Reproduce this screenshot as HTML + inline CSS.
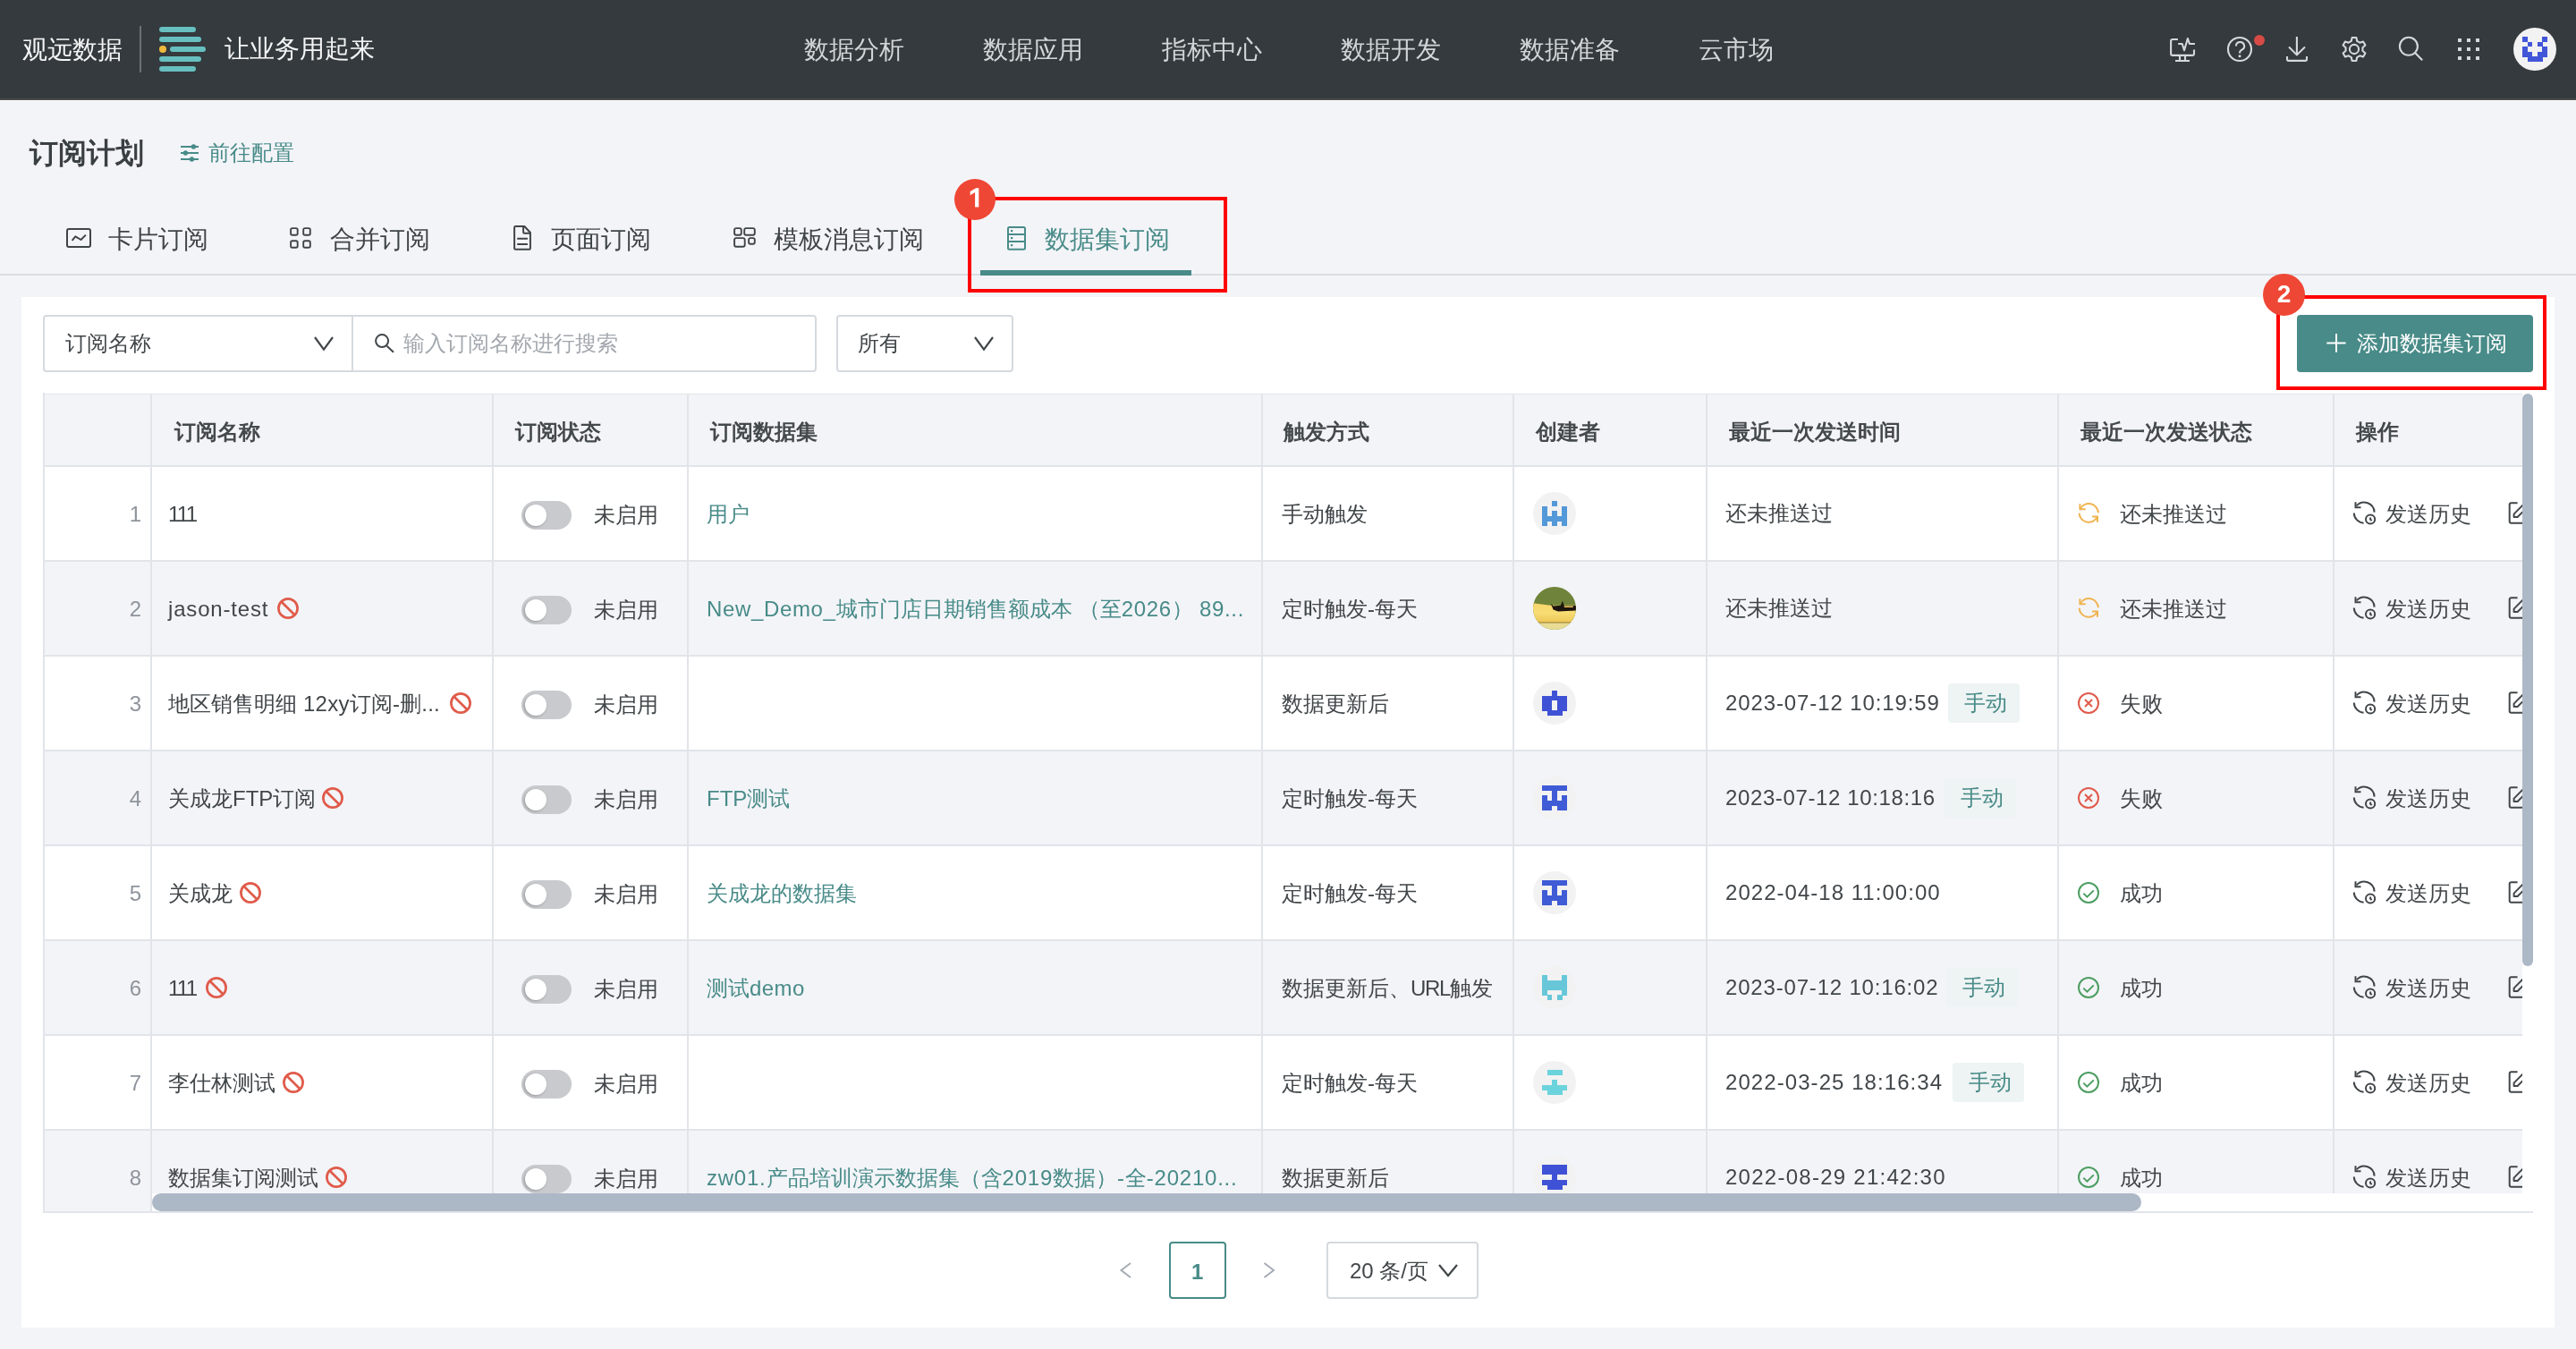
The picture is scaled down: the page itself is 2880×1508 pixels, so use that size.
<!DOCTYPE html><html><head><meta charset="utf-8"><style>
html,body{margin:0;padding:0}
body{width:2880px;height:1508px;overflow:hidden;position:relative;background:#f3f4f8;font-family:"Liberation Sans",sans-serif}
.a{position:absolute}
.t{white-space:nowrap}
#root{position:absolute;left:0;top:0;width:2880px;height:1508px;will-change:transform}
</style></head><body><div id="root">
<div class="a" style="left:0px;top:0px;width:2880px;height:110px;background:#343a3d"></div>
<div class="a" style="left:0px;top:110px;width:2880px;height:2px;background:#4a4b4c"></div>
<div class="a" style="left:0px;top:112px;width:2880px;height:1px;background:#ffffff"></div>
<div class="a t " style="left:25px;top:42px;font-size:28px;line-height:28px;color:#f4f5f6;font-weight:400;">观远数据</div>
<div class="a" style="left:156px;top:29px;width:2px;height:52px;background:#6c7174"></div>
<div class="a" style="left:178px;top:29.5px;width:41px;height:6.5px;background:#67bfc0;border-radius:4px"></div>
<div class="a" style="left:178px;top:40.5px;width:47px;height:6.5px;background:#67bfc0;border-radius:4px"></div>
<div class="a" style="left:190px;top:51.5px;width:40px;height:6.5px;background:#67bfc0;border-radius:4px"></div>
<div class="a" style="left:178px;top:62.5px;width:47px;height:6.5px;background:#67bfc0;border-radius:4px"></div>
<div class="a" style="left:178px;top:73.5px;width:41px;height:6.5px;background:#67bfc0;border-radius:4px"></div>
<div class="a" style="left:178px;top:51px;width:8px;height:8px;background:#f0b93e;border-radius:50%"></div>
<div class="a t " style="left:251px;top:41px;font-size:28px;line-height:28px;color:#f4f5f6;font-weight:400;">让业务用起来</div>
<div class="a t " style="left:899px;top:42px;font-size:28px;line-height:28px;color:#d3d6d9;font-weight:400;">数据分析</div>
<div class="a t " style="left:1099px;top:42px;font-size:28px;line-height:28px;color:#d3d6d9;font-weight:400;">数据应用</div>
<div class="a t " style="left:1299px;top:42px;font-size:28px;line-height:28px;color:#d3d6d9;font-weight:400;">指标中心</div>
<div class="a t " style="left:1499px;top:42px;font-size:28px;line-height:28px;color:#d3d6d9;font-weight:400;">数据开发</div>
<div class="a t " style="left:1699px;top:42px;font-size:28px;line-height:28px;color:#d3d6d9;font-weight:400;">数据准备</div>
<div class="a t " style="left:1899px;top:42px;font-size:28px;line-height:28px;color:#d3d6d9;font-weight:400;">云市场</div>
<svg class="a" style="left:2420px;top:36px;" width="40" height="38" viewBox="0 0 40 38" fill="none"><g stroke="#d5d8dc" stroke-width="2.1" fill="none"><path d="M14.9 8 H9.1 Q7.1 8 7.1 10 V23.9 Q7.1 25.9 9.1 25.9 H31 Q33 25.9 33 23.9 V19.4"/><path d="M15.2 13 H19.7 L22 20.3 L25.9 7 L27.9 13 H33.9" stroke-linejoin="round"/><path d="M17 25.9 V32 M23 25.9 V32 M12 32 H28"/></g></svg>
<svg class="a" style="left:2484px;top:34px;" width="52" height="40" viewBox="0 0 52 40" fill="none"><g stroke="#d5d8dc" stroke-width="2.1" fill="none"><circle cx="20" cy="21" r="13"/><path d="M15.9 17.6 A4.6 4.6 0 1 1 22.3 21.8 Q20.1 22.9 20.1 24.6 V25.6"/></g><circle cx="20" cy="28.8" r="1.5" fill="#d5d8dc"/><circle cx="42" cy="11" r="6" fill="#d84a45"/></svg>
<svg class="a" style="left:2550px;top:36px;" width="40" height="38" viewBox="0 0 40 38" fill="none"><g stroke="#d5d8dc" stroke-width="2.1" fill="none"><path d="M17.9 5 V25.5 M9 16.6 L17.9 25.4 L27 16.6"/><path d="M7 27 V30.2 Q7 31.9 8.7 31.9 H27.3 Q29 31.9 29 30.2 V27"/></g></svg>
<svg class="a" style="left:2612px;top:36px;" width="40" height="38" viewBox="0 0 40 38" fill="none"><g stroke="#d5d8dc" stroke-width="2.1" fill="none" stroke-linejoin="round"><path d="M17.64 6.01 L22.36 6.01 L23.22 9.96 L26.22 11.69 L30.07 10.46 L32.43 14.55 L29.44 17.27 L29.44 20.73 L32.43 23.45 L30.07 27.54 L26.22 26.31 L23.22 28.04 L22.36 31.99 L17.64 31.99 L16.78 28.04 L13.78 26.31 L9.93 27.54 L7.57 23.45 L10.56 20.73 L10.56 17.27 L7.57 14.55 L9.93 10.46 L13.78 11.69 L16.78 9.96 Z"/><circle cx="20" cy="19" r="5.1"/></g></svg>
<svg class="a" style="left:2676px;top:36px;" width="40" height="38" viewBox="0 0 40 38" fill="none"><g stroke="#d5d8dc" stroke-width="2.1" fill="none"><circle cx="16.9" cy="15.8" r="10"/><path d="M24 23 L32.2 31.3"/></g></svg>
<div class="a" style="left:2747.5px;top:42.7px;width:4.8px;height:4.8px;background:#d5d8dc"></div>
<div class="a" style="left:2757.5px;top:42.7px;width:4.8px;height:4.8px;background:#d5d8dc"></div>
<div class="a" style="left:2767.5px;top:42.7px;width:4.8px;height:4.8px;background:#d5d8dc"></div>
<div class="a" style="left:2747.5px;top:52.7px;width:4.8px;height:4.8px;background:#d5d8dc"></div>
<div class="a" style="left:2757.5px;top:52.7px;width:4.8px;height:4.8px;background:#d5d8dc"></div>
<div class="a" style="left:2767.5px;top:52.7px;width:4.8px;height:4.8px;background:#d5d8dc"></div>
<div class="a" style="left:2747.5px;top:62.7px;width:4.8px;height:4.8px;background:#d5d8dc"></div>
<div class="a" style="left:2757.5px;top:62.7px;width:4.8px;height:4.8px;background:#d5d8dc"></div>
<div class="a" style="left:2767.5px;top:62.7px;width:4.8px;height:4.8px;background:#d5d8dc"></div>
<div class="a" style="left:2810px;top:31px;width:48px;height:48px;border-radius:50%;background:#f2f2f2;overflow:hidden">
<div class="a" style="left:10.00px;top:10.00px;width:5.80px;height:5.80px;background:#4256d8"></div>
<div class="a" style="left:32.40px;top:10.00px;width:5.80px;height:5.80px;background:#4256d8"></div>
<div class="a" style="left:15.60px;top:15.60px;width:5.80px;height:5.80px;background:#4256d8"></div>
<div class="a" style="left:26.80px;top:15.60px;width:5.80px;height:5.80px;background:#4256d8"></div>
<div class="a" style="left:10.00px;top:21.20px;width:5.80px;height:5.80px;background:#4256d8"></div>
<div class="a" style="left:32.40px;top:21.20px;width:5.80px;height:5.80px;background:#4256d8"></div>
<div class="a" style="left:10.00px;top:26.80px;width:5.80px;height:5.80px;background:#4256d8"></div>
<div class="a" style="left:15.60px;top:26.80px;width:5.80px;height:5.80px;background:#4256d8"></div>
<div class="a" style="left:26.80px;top:26.80px;width:5.80px;height:5.80px;background:#4256d8"></div>
<div class="a" style="left:32.40px;top:26.80px;width:5.80px;height:5.80px;background:#4256d8"></div>
<div class="a" style="left:15.60px;top:32.40px;width:5.80px;height:5.80px;background:#4256d8"></div>
<div class="a" style="left:21.20px;top:32.40px;width:5.80px;height:5.80px;background:#4256d8"></div>
<div class="a" style="left:26.80px;top:32.40px;width:5.80px;height:5.80px;background:#4256d8"></div>
</div>
<div class="a t " style="left:33px;top:155px;font-size:32px;line-height:32px;color:#3a3f43;font-weight:700;">订阅计划</div>
<svg class="a" style="left:198px;top:156px;" width="28" height="28" viewBox="0 0 28 28" fill="none"><g stroke="#488b88" stroke-width="2" fill="none"><path d="M4 8 H24 M4 15 H24 M4 22 H24"/></g><circle cx="18.4" cy="8" r="2.7" fill="#488b88"/><circle cx="9.4" cy="15" r="2.7" fill="#488b88"/><circle cx="16.5" cy="22" r="2.7" fill="#488b88"/></svg>
<div class="a t " style="left:233px;top:159px;font-size:24px;line-height:24px;color:#488b88;font-weight:400;">前往配置</div>
<div class="a" style="left:0px;top:306px;width:2880px;height:2px;background:#d9dde3"></div>
<svg class="a" style="left:66px;top:246px;" width="44" height="38" viewBox="0 0 44 38" fill="none"><g stroke="#3f4447" stroke-width="2" fill="none" stroke-linejoin="round"><rect x="9" y="10" width="26" height="20" rx="2"/><path d="M14.6 22.8 L18.3 18.3 L24.5 22 L29.9 16.6"/></g></svg>
<div class="a t " style="left:121px;top:254px;font-size:28px;line-height:28px;color:#3f4447;font-weight:400;">卡片订阅</div>
<svg class="a" style="left:316px;top:246px;" width="40" height="38" viewBox="0 0 40 38" fill="none"><g stroke="#3f4447" stroke-width="1.9" fill="none"><rect x="9.1" y="9.1" width="7.6" height="7.6" rx="1.8"/><rect x="23.2" y="9.1" width="7.6" height="7.6" rx="1.8"/><rect x="9.1" y="23.2" width="7.6" height="7.6" rx="1.8"/><rect x="23.2" y="23.2" width="7.6" height="7.6" rx="1.8"/></g></svg>
<div class="a t " style="left:369px;top:254px;font-size:28px;line-height:28px;color:#3f4447;font-weight:400;">合并订阅</div>
<svg class="a" style="left:564px;top:246px;" width="40" height="38" viewBox="0 0 40 38" fill="none"><g stroke="#3f4447" stroke-width="2" fill="none" stroke-linejoin="round"><path d="M22.3 7 H12 Q11.1 7 11.1 8.5 V31.7 Q11.1 32.7 12.5 32.7 H27.9 Q28.9 32.7 28.9 31.5 V14 Z"/><path d="M21.1 7 V13.6 Q21.1 14.8 22.3 14.8 H28.9"/><path d="M14.2 20.8 H25.9 M14.2 26.9 H25.9"/></g></svg>
<div class="a t " style="left:616px;top:254px;font-size:28px;line-height:28px;color:#3f4447;font-weight:400;">页面订阅</div>
<svg class="a" style="left:812px;top:246px;" width="40" height="38" viewBox="0 0 40 38" fill="none"><g stroke="#3f4447" stroke-width="1.9" fill="none"><rect x="9.1" y="9.1" width="7.7" height="7.7" rx="2"/><rect x="20.2" y="9.1" width="11.6" height="7.7" rx="2"/><rect x="9.1" y="20.1" width="11.6" height="9.6" rx="2"/><rect x="25.1" y="20.1" width="6.7" height="6.6" rx="2"/></g></svg>
<div class="a t " style="left:865px;top:254px;font-size:28px;line-height:28px;color:#3f4447;font-weight:400;">模板消息订阅</div>
<svg class="a" style="left:1116px;top:246px;" width="40" height="38" viewBox="0 0 40 38" fill="none"><g stroke="#488b88" stroke-width="2" fill="none"><rect x="11" y="7.9" width="19" height="24.9" rx="1.5"/><path d="M11 15.9 H30 M11 23.9 H30"/></g><rect x="14" y="11" width="2.2" height="2.2" fill="#488b88"/><rect x="14" y="19" width="2.2" height="2.2" fill="#488b88"/><rect x="14" y="27" width="2.2" height="2.2" fill="#488b88"/></svg>
<div class="a t " style="left:1168px;top:254px;font-size:28px;line-height:28px;color:#488b88;font-weight:400;">数据集订阅</div>
<div class="a" style="left:1096px;top:302px;width:236px;height:6px;background:#488b88"></div>
<div class="a" style="left:24px;top:332px;width:2832px;height:1152px;background:#ffffff"></div>
<div class="a" style="left:48px;top:352px;width:865px;height:64px;border:2px solid #d5d9df;border-radius:4px;box-sizing:border-box"></div>
<div class="a" style="left:393px;top:352px;width:2px;height:64px;background:#d5d9df"></div>
<div class="a t " style="left:73px;top:372px;font-size:24px;line-height:24px;color:#414649;font-weight:400;">订阅名称</div>
<svg class="a" style="left:346px;top:370px;" width="32" height="28" viewBox="0 0 32 28" fill="none"><path d="M6 7 L16 20.6 L26 7" stroke="#414649" stroke-width="2.2" fill="none"/></svg>
<svg class="a" style="left:410px;top:366px;" width="40" height="36" viewBox="0 0 40 36" fill="none"><g stroke="#414649" stroke-width="2" fill="none"><circle cx="17.1" cy="15.1" r="7"/><path d="M22.5 20.8 L30 27.8"/></g></svg>
<div class="a t " style="left:451px;top:372px;font-size:24px;line-height:24px;color:#a3a8ae;font-weight:400;">输入订阅名称进行搜索</div>
<div class="a" style="left:935px;top:352px;width:198px;height:64px;border:2px solid #d5d9df;border-radius:4px;box-sizing:border-box"></div>
<div class="a t " style="left:959px;top:372px;font-size:24px;line-height:24px;color:#414649;font-weight:400;">所有</div>
<svg class="a" style="left:1084px;top:370px;" width="32" height="28" viewBox="0 0 32 28" fill="none"><path d="M6 7 L16 20.6 L26 7" stroke="#414649" stroke-width="2.2" fill="none"/></svg>
<div class="a" style="left:2568px;top:352px;width:264px;height:64px;background:#488b88;border-radius:4px"></div>
<svg class="a" style="left:2590px;top:362px;" width="40" height="44" viewBox="0 0 40 44" fill="none"><path d="M22 11 V31.8 M11.3 21.5 H32.6" stroke="#fff" stroke-width="2" fill="none"/></svg>
<div class="a t " style="left:2635px;top:372px;font-size:24px;line-height:24px;color:#ffffff;font-weight:400;">添加数据集订阅</div>
<div class="a" style="left:48px;top:440px;width:2772px;height:914px;overflow:hidden">
<div class="a" style="left:0px;top:0px;width:2772px;height:81px;background:#f3f4f8"></div>
<div class="a" style="left:0px;top:80px;width:2772px;height:108px;background:#ffffff"></div>
<div class="a" style="left:0px;top:186px;width:2772px;height:108px;background:#f3f4f8"></div>
<div class="a" style="left:0px;top:292px;width:2772px;height:108px;background:#ffffff"></div>
<div class="a" style="left:0px;top:398px;width:2772px;height:108px;background:#f3f4f8"></div>
<div class="a" style="left:0px;top:504px;width:2772px;height:108px;background:#ffffff"></div>
<div class="a" style="left:0px;top:610px;width:2772px;height:108px;background:#f3f4f8"></div>
<div class="a" style="left:0px;top:716px;width:2772px;height:108px;background:#ffffff"></div>
<div class="a" style="left:0px;top:822px;width:2772px;height:108px;background:#f3f4f8"></div>
<div class="a" style="left:0px;top:-1px;width:2772px;height:2px;background:#e1e4e9"></div>
<div class="a" style="left:0px;top:80px;width:2772px;height:2px;background:#e1e4e9"></div>
<div class="a" style="left:0px;top:186px;width:2772px;height:2px;background:#e1e4e9"></div>
<div class="a" style="left:0px;top:292px;width:2772px;height:2px;background:#e1e4e9"></div>
<div class="a" style="left:0px;top:398px;width:2772px;height:2px;background:#e1e4e9"></div>
<div class="a" style="left:0px;top:504px;width:2772px;height:2px;background:#e1e4e9"></div>
<div class="a" style="left:0px;top:610px;width:2772px;height:2px;background:#e1e4e9"></div>
<div class="a" style="left:0px;top:716px;width:2772px;height:2px;background:#e1e4e9"></div>
<div class="a" style="left:0px;top:822px;width:2772px;height:2px;background:#e1e4e9"></div>
<div class="a" style="left:0px;top:-1px;width:2px;height:915px;background:#e1e4e9"></div>
<div class="a" style="left:120px;top:-1px;width:2px;height:915px;background:#e1e4e9"></div>
<div class="a" style="left:502px;top:-1px;width:2px;height:915px;background:#e1e4e9"></div>
<div class="a" style="left:720px;top:-1px;width:2px;height:915px;background:#e1e4e9"></div>
<div class="a" style="left:1362px;top:-1px;width:2px;height:915px;background:#e1e4e9"></div>
<div class="a" style="left:1643px;top:-1px;width:2px;height:915px;background:#e1e4e9"></div>
<div class="a" style="left:1859px;top:-1px;width:2px;height:915px;background:#e1e4e9"></div>
<div class="a" style="left:2252px;top:-1px;width:2px;height:915px;background:#e1e4e9"></div>
<div class="a" style="left:2560px;top:-1px;width:2px;height:915px;background:#e1e4e9"></div>
<div class="a t" style="left:147px;top:30.5px;font-size:24px;line-height:24px;color:#44494c;font-weight:700;">订阅名称</div>
<div class="a t" style="left:528px;top:30.5px;font-size:24px;line-height:24px;color:#44494c;font-weight:700;">订阅状态</div>
<div class="a t" style="left:746px;top:30.5px;font-size:24px;line-height:24px;color:#44494c;font-weight:700;">订阅数据集</div>
<div class="a t" style="left:1387px;top:30.5px;font-size:24px;line-height:24px;color:#44494c;font-weight:700;">触发方式</div>
<div class="a t" style="left:1669px;top:30.5px;font-size:24px;line-height:24px;color:#44494c;font-weight:700;">创建者</div>
<div class="a t" style="left:1885px;top:30.5px;font-size:24px;line-height:24px;color:#44494c;font-weight:700;">最近一次发送时间</div>
<div class="a t" style="left:2278px;top:30.5px;font-size:24px;line-height:24px;color:#44494c;font-weight:700;">最近一次发送状态</div>
<div class="a t" style="left:2586px;top:30.5px;font-size:24px;line-height:24px;color:#44494c;font-weight:700;">操作</div>
<div class="a t" style="left:12px;top:122.5px;width:98px;text-align:right;font-size:24px;line-height:24px;color:#8e949b">1</div>
<div class="a t" style="left:140px;top:122.5px;font-size:24px;line-height:24px;color:#414649;font-weight:400;"><span style="letter-spacing:-1.7px">111</span></div>
<div class="a" style="left:535px;top:120px;width:56px;height:32px;background:#c8cacd;border-radius:16px"></div>
<div class="a" style="left:539px;top:124px;width:24px;height:24px;background:#fff;border-radius:50%;box-shadow:-1px 1px 3px rgba(0,0,0,0.25)"></div>
<div class="a t" style="left:616px;top:123.5px;font-size:24px;line-height:24px;color:#414649;font-weight:400;">未启用</div>
<div class="a t" style="left:742px;top:122.5px;font-size:24px;line-height:24px;color:#488b88;font-weight:400;">用户</div>
<div class="a t" style="left:1385px;top:122.5px;font-size:24px;line-height:24px;color:#414649;font-weight:400;">手动触发</div>
<div class="a" style="left:1666px;top:110px;width:48px;height:48px;border-radius:50%;background:#f2f2f2;overflow:hidden">
<div class="a" style="left:21.20px;top:10.00px;width:5.85px;height:5.85px;background:#5398d8"></div>
<div class="a" style="left:10.00px;top:15.60px;width:5.85px;height:5.85px;background:#5398d8"></div>
<div class="a" style="left:32.40px;top:15.60px;width:5.85px;height:5.85px;background:#5398d8"></div>
<div class="a" style="left:10.00px;top:21.20px;width:5.85px;height:5.85px;background:#5398d8"></div>
<div class="a" style="left:21.20px;top:21.20px;width:5.85px;height:5.85px;background:#5398d8"></div>
<div class="a" style="left:32.40px;top:21.20px;width:5.85px;height:5.85px;background:#5398d8"></div>
<div class="a" style="left:10.00px;top:26.80px;width:5.85px;height:5.85px;background:#5398d8"></div>
<div class="a" style="left:15.60px;top:26.80px;width:5.85px;height:5.85px;background:#5398d8"></div>
<div class="a" style="left:21.20px;top:26.80px;width:5.85px;height:5.85px;background:#5398d8"></div>
<div class="a" style="left:26.80px;top:26.80px;width:5.85px;height:5.85px;background:#5398d8"></div>
<div class="a" style="left:32.40px;top:26.80px;width:5.85px;height:5.85px;background:#5398d8"></div>
<div class="a" style="left:10.00px;top:32.40px;width:5.85px;height:5.85px;background:#5398d8"></div>
<div class="a" style="left:21.20px;top:32.40px;width:5.85px;height:5.85px;background:#5398d8"></div>
<div class="a" style="left:32.40px;top:32.40px;width:5.85px;height:5.85px;background:#5398d8"></div>
</div>
<div class="a t" style="left:1881px;top:121.5px;font-size:24px;line-height:24px;color:#414649;font-weight:400;">还未推送过</div>
<svg class="a" style="left:2274px;top:120px" width="28" height="28" viewBox="0 0 28 28" fill="none"><g stroke="#f0b452" stroke-width="2" fill="none"><path d="M3.6 9.1 A10.7 10.7 0 0 1 23.9 13.2"/><path d="M2.6 13.6 A10.7 10.7 0 0 0 22.9 17.8"/><path d="M3.4 3.2 V9.3 H9.7"/><path d="M17.1 17.6 H23 V23.7"/></g></svg>
<div class="a t" style="left:2322px;top:122.5px;font-size:24px;line-height:24px;color:#414649;font-weight:400;">还未推送过</div>
<svg class="a" style="left:2578px;top:114px" width="36" height="38" viewBox="0 0 36 38" fill="none"><g stroke="#414649" stroke-width="2" fill="none"><path d="M8.6 11.4 A11.5 11.5 0 0 1 28.6 18.6"/><path d="M5.8 19.4 A11.5 11.5 0 0 0 16.6 30.7"/><path d="M7.5 7.3 V13.2 H13.5"/><circle cx="24.1" cy="26.5" r="5.1"/><path d="M24.1 24.5 V26.5 L25.6 28.2"/></g></svg>
<div class="a t" style="left:2619px;top:122.5px;font-size:24px;line-height:24px;color:#414649;font-weight:400;">发送历史</div>
<svg class="a" style="left:2748px;top:114px" width="38" height="38" viewBox="0 0 38 38" fill="none"><g stroke="#414649" stroke-width="2" fill="none" stroke-linejoin="round"><path d="M18.6 8.2 H11.7 Q9.7 8.2 9.7 10.2 V28.7 Q9.7 30.7 11.7 30.7 H30"/><path d="M14.6 20.6 V24 H18.6 L30 12.6 L26.2 9 Z"/></g></svg>
<div class="a t" style="left:12px;top:228.5px;width:98px;text-align:right;font-size:24px;line-height:24px;color:#8e949b">2</div>
<div class="a t" style="left:140px;top:228.5px;font-size:24px;line-height:24px;color:#414649;font-weight:400;"><span style="letter-spacing:0.83px">jason-test</span></div>
<svg class="a" style="left:262px;top:228px" width="24" height="24" viewBox="0 0 24 24" fill="none"><g stroke="#e05b4b" stroke-width="2.7" fill="none"><circle cx="12" cy="12" r="10.6"/><path d="M4.7 4.7 L19.3 19.3"/></g></svg>
<div class="a" style="left:535px;top:226px;width:56px;height:32px;background:#c8cacd;border-radius:16px"></div>
<div class="a" style="left:539px;top:230px;width:24px;height:24px;background:#fff;border-radius:50%;box-shadow:-1px 1px 3px rgba(0,0,0,0.25)"></div>
<div class="a t" style="left:616px;top:229.5px;font-size:24px;line-height:24px;color:#414649;font-weight:400;">未启用</div>
<div class="a t" style="left:742px;top:228.5px;font-size:24px;line-height:24px;color:#488b88;font-weight:400;"><span style="letter-spacing:0.64px">New_Demo_</span>城市门店日期销售额成本<span style="letter-spacing:0.64px"> </span>（至<span style="letter-spacing:0.64px">2026</span>）<span style="letter-spacing:0.64px"> 89...</span></div>
<div class="a t" style="left:1385px;top:228.5px;font-size:24px;line-height:24px;color:#414649;font-weight:400;">定时触发-每天</div>
<svg class="a" style="left:1666px;top:216px" width="48" height="48" viewBox="0 0 48 48" fill="none"><defs><clipPath id="pc"><circle cx="24" cy="24" r="24"/></clipPath><linearGradient id="pg" x1="0" y1="0" x2="0" y2="1"><stop offset="0" stop-color="#f6d66c"/><stop offset="0.5" stop-color="#f8dc74"/><stop offset="1" stop-color="#ecc756"/></linearGradient></defs><g clip-path="url(#pc)"><rect width="48" height="48" fill="#6f843a"/><path d="M0 18.2 L19.6 20.7 L48 20.7 V40 H0 Z" fill="url(#pg)"/><rect x="0" y="39.2" width="48" height="1.3" fill="#b88f40"/><rect x="0" y="40.5" width="48" height="8" fill="#e8dc95"/><path d="M19.8 18.8 L22.6 21.4 L30.8 20.8 L33 15.8 L34.6 20.9 L48 21 V26.6 L28 27.6 L22.6 25.4 Z" fill="#1c140e"/><rect x="34.8" y="21.4" width="10" height="1.6" fill="#f0c860"/></g></svg>
<div class="a t" style="left:1881px;top:227.5px;font-size:24px;line-height:24px;color:#414649;font-weight:400;">还未推送过</div>
<svg class="a" style="left:2274px;top:226px" width="28" height="28" viewBox="0 0 28 28" fill="none"><g stroke="#f0b452" stroke-width="2" fill="none"><path d="M3.6 9.1 A10.7 10.7 0 0 1 23.9 13.2"/><path d="M2.6 13.6 A10.7 10.7 0 0 0 22.9 17.8"/><path d="M3.4 3.2 V9.3 H9.7"/><path d="M17.1 17.6 H23 V23.7"/></g></svg>
<div class="a t" style="left:2322px;top:228.5px;font-size:24px;line-height:24px;color:#414649;font-weight:400;">还未推送过</div>
<svg class="a" style="left:2578px;top:220px" width="36" height="38" viewBox="0 0 36 38" fill="none"><g stroke="#414649" stroke-width="2" fill="none"><path d="M8.6 11.4 A11.5 11.5 0 0 1 28.6 18.6"/><path d="M5.8 19.4 A11.5 11.5 0 0 0 16.6 30.7"/><path d="M7.5 7.3 V13.2 H13.5"/><circle cx="24.1" cy="26.5" r="5.1"/><path d="M24.1 24.5 V26.5 L25.6 28.2"/></g></svg>
<div class="a t" style="left:2619px;top:228.5px;font-size:24px;line-height:24px;color:#414649;font-weight:400;">发送历史</div>
<svg class="a" style="left:2748px;top:220px" width="38" height="38" viewBox="0 0 38 38" fill="none"><g stroke="#414649" stroke-width="2" fill="none" stroke-linejoin="round"><path d="M18.6 8.2 H11.7 Q9.7 8.2 9.7 10.2 V28.7 Q9.7 30.7 11.7 30.7 H30"/><path d="M14.6 20.6 V24 H18.6 L30 12.6 L26.2 9 Z"/></g></svg>
<div class="a t" style="left:12px;top:334.5px;width:98px;text-align:right;font-size:24px;line-height:24px;color:#8e949b">3</div>
<div class="a t" style="left:140px;top:334.5px;font-size:24px;line-height:24px;color:#414649;font-weight:400;">地区销售明细<span style="letter-spacing:0.3px"> 12xy</span>订阅<span style="letter-spacing:0.3px">-</span>删<span style="letter-spacing:0.3px">...</span></div>
<svg class="a" style="left:455px;top:334px" width="24" height="24" viewBox="0 0 24 24" fill="none"><g stroke="#e05b4b" stroke-width="2.7" fill="none"><circle cx="12" cy="12" r="10.6"/><path d="M4.7 4.7 L19.3 19.3"/></g></svg>
<div class="a" style="left:535px;top:332px;width:56px;height:32px;background:#c8cacd;border-radius:16px"></div>
<div class="a" style="left:539px;top:336px;width:24px;height:24px;background:#fff;border-radius:50%;box-shadow:-1px 1px 3px rgba(0,0,0,0.25)"></div>
<div class="a t" style="left:616px;top:335.5px;font-size:24px;line-height:24px;color:#414649;font-weight:400;">未启用</div>
<div class="a t" style="left:1385px;top:334.5px;font-size:24px;line-height:24px;color:#414649;font-weight:400;">数据更新后</div>
<div class="a" style="left:1666px;top:322px;width:48px;height:48px;border-radius:50%;background:#f2f2f2;overflow:hidden">
<div class="a" style="left:21.20px;top:10.00px;width:5.85px;height:5.85px;background:#3f52d6"></div>
<div class="a" style="left:10.00px;top:15.60px;width:5.85px;height:5.85px;background:#3f52d6"></div>
<div class="a" style="left:15.60px;top:15.60px;width:5.85px;height:5.85px;background:#3f52d6"></div>
<div class="a" style="left:21.20px;top:15.60px;width:5.85px;height:5.85px;background:#3f52d6"></div>
<div class="a" style="left:26.80px;top:15.60px;width:5.85px;height:5.85px;background:#3f52d6"></div>
<div class="a" style="left:32.40px;top:15.60px;width:5.85px;height:5.85px;background:#3f52d6"></div>
<div class="a" style="left:10.00px;top:21.20px;width:5.85px;height:5.85px;background:#3f52d6"></div>
<div class="a" style="left:15.60px;top:21.20px;width:5.85px;height:5.85px;background:#3f52d6"></div>
<div class="a" style="left:26.80px;top:21.20px;width:5.85px;height:5.85px;background:#3f52d6"></div>
<div class="a" style="left:32.40px;top:21.20px;width:5.85px;height:5.85px;background:#3f52d6"></div>
<div class="a" style="left:10.00px;top:26.80px;width:5.85px;height:5.85px;background:#3f52d6"></div>
<div class="a" style="left:15.60px;top:26.80px;width:5.85px;height:5.85px;background:#3f52d6"></div>
<div class="a" style="left:26.80px;top:26.80px;width:5.85px;height:5.85px;background:#3f52d6"></div>
<div class="a" style="left:32.40px;top:26.80px;width:5.85px;height:5.85px;background:#3f52d6"></div>
<div class="a" style="left:15.60px;top:32.40px;width:5.85px;height:5.85px;background:#3f52d6"></div>
<div class="a" style="left:21.20px;top:32.40px;width:5.85px;height:5.85px;background:#3f52d6"></div>
<div class="a" style="left:26.80px;top:32.40px;width:5.85px;height:5.85px;background:#3f52d6"></div>
</div>
<div class="a t" style="left:1881px;top:333.5px;font-size:24px;line-height:24px;color:#414649;font-weight:400;"><span style="letter-spacing:0.89px">2023-07-12 10:19:59</span></div>
<svg class="a" style="left:2274px;top:333px" width="26" height="26" viewBox="0 0 26 26" fill="none"><g stroke="#e05a4a" stroke-width="2" fill="none"><circle cx="13" cy="13" r="11"/><path d="M9 9 L17 17 M17 9 L9 17"/></g></svg>
<div class="a t" style="left:2322px;top:334.5px;font-size:24px;line-height:24px;color:#414649;font-weight:400;">失败</div>
<svg class="a" style="left:2578px;top:326px" width="36" height="38" viewBox="0 0 36 38" fill="none"><g stroke="#414649" stroke-width="2" fill="none"><path d="M8.6 11.4 A11.5 11.5 0 0 1 28.6 18.6"/><path d="M5.8 19.4 A11.5 11.5 0 0 0 16.6 30.7"/><path d="M7.5 7.3 V13.2 H13.5"/><circle cx="24.1" cy="26.5" r="5.1"/><path d="M24.1 24.5 V26.5 L25.6 28.2"/></g></svg>
<div class="a t" style="left:2619px;top:334.5px;font-size:24px;line-height:24px;color:#414649;font-weight:400;">发送历史</div>
<svg class="a" style="left:2748px;top:326px" width="38" height="38" viewBox="0 0 38 38" fill="none"><g stroke="#414649" stroke-width="2" fill="none" stroke-linejoin="round"><path d="M18.6 8.2 H11.7 Q9.7 8.2 9.7 10.2 V28.7 Q9.7 30.7 11.7 30.7 H30"/><path d="M14.6 20.6 V24 H18.6 L30 12.6 L26.2 9 Z"/></g></svg>
<div class="a t" style="left:12px;top:440.5px;width:98px;text-align:right;font-size:24px;line-height:24px;color:#8e949b">4</div>
<div class="a t" style="left:140px;top:440.5px;font-size:24px;line-height:24px;color:#414649;font-weight:400;">关成龙FTP订阅</div>
<svg class="a" style="left:312px;top:440px" width="24" height="24" viewBox="0 0 24 24" fill="none"><g stroke="#e05b4b" stroke-width="2.7" fill="none"><circle cx="12" cy="12" r="10.6"/><path d="M4.7 4.7 L19.3 19.3"/></g></svg>
<div class="a" style="left:535px;top:438px;width:56px;height:32px;background:#c8cacd;border-radius:16px"></div>
<div class="a" style="left:539px;top:442px;width:24px;height:24px;background:#fff;border-radius:50%;box-shadow:-1px 1px 3px rgba(0,0,0,0.25)"></div>
<div class="a t" style="left:616px;top:441.5px;font-size:24px;line-height:24px;color:#414649;font-weight:400;">未启用</div>
<div class="a t" style="left:742px;top:440.5px;font-size:24px;line-height:24px;color:#488b88;font-weight:400;">FTP测试</div>
<div class="a t" style="left:1385px;top:440.5px;font-size:24px;line-height:24px;color:#414649;font-weight:400;">定时触发-每天</div>
<div class="a" style="left:1666px;top:428px;width:48px;height:48px;border-radius:50%;background:#f2f2f2;overflow:hidden">
<div class="a" style="left:10.00px;top:10.00px;width:5.85px;height:5.85px;background:#3f5bd6"></div>
<div class="a" style="left:15.60px;top:10.00px;width:5.85px;height:5.85px;background:#3f5bd6"></div>
<div class="a" style="left:21.20px;top:10.00px;width:5.85px;height:5.85px;background:#3f5bd6"></div>
<div class="a" style="left:26.80px;top:10.00px;width:5.85px;height:5.85px;background:#3f5bd6"></div>
<div class="a" style="left:32.40px;top:10.00px;width:5.85px;height:5.85px;background:#3f5bd6"></div>
<div class="a" style="left:21.20px;top:15.60px;width:5.85px;height:5.85px;background:#3f5bd6"></div>
<div class="a" style="left:10.00px;top:21.20px;width:5.85px;height:5.85px;background:#3f5bd6"></div>
<div class="a" style="left:21.20px;top:21.20px;width:5.85px;height:5.85px;background:#3f5bd6"></div>
<div class="a" style="left:32.40px;top:21.20px;width:5.85px;height:5.85px;background:#3f5bd6"></div>
<div class="a" style="left:10.00px;top:26.80px;width:5.85px;height:5.85px;background:#3f5bd6"></div>
<div class="a" style="left:15.60px;top:26.80px;width:5.85px;height:5.85px;background:#3f5bd6"></div>
<div class="a" style="left:21.20px;top:26.80px;width:5.85px;height:5.85px;background:#3f5bd6"></div>
<div class="a" style="left:26.80px;top:26.80px;width:5.85px;height:5.85px;background:#3f5bd6"></div>
<div class="a" style="left:32.40px;top:26.80px;width:5.85px;height:5.85px;background:#3f5bd6"></div>
<div class="a" style="left:10.00px;top:32.40px;width:5.85px;height:5.85px;background:#3f5bd6"></div>
<div class="a" style="left:15.60px;top:32.40px;width:5.85px;height:5.85px;background:#3f5bd6"></div>
<div class="a" style="left:26.80px;top:32.40px;width:5.85px;height:5.85px;background:#3f5bd6"></div>
<div class="a" style="left:32.40px;top:32.40px;width:5.85px;height:5.85px;background:#3f5bd6"></div>
</div>
<div class="a t" style="left:1881px;top:439.5px;font-size:24px;line-height:24px;color:#414649;font-weight:400;"><span style="letter-spacing:0.62px">2023-07-12 10:18:16</span></div>
<svg class="a" style="left:2274px;top:439px" width="26" height="26" viewBox="0 0 26 26" fill="none"><g stroke="#e05a4a" stroke-width="2" fill="none"><circle cx="13" cy="13" r="11"/><path d="M9 9 L17 17 M17 9 L9 17"/></g></svg>
<div class="a t" style="left:2322px;top:440.5px;font-size:24px;line-height:24px;color:#414649;font-weight:400;">失败</div>
<svg class="a" style="left:2578px;top:432px" width="36" height="38" viewBox="0 0 36 38" fill="none"><g stroke="#414649" stroke-width="2" fill="none"><path d="M8.6 11.4 A11.5 11.5 0 0 1 28.6 18.6"/><path d="M5.8 19.4 A11.5 11.5 0 0 0 16.6 30.7"/><path d="M7.5 7.3 V13.2 H13.5"/><circle cx="24.1" cy="26.5" r="5.1"/><path d="M24.1 24.5 V26.5 L25.6 28.2"/></g></svg>
<div class="a t" style="left:2619px;top:440.5px;font-size:24px;line-height:24px;color:#414649;font-weight:400;">发送历史</div>
<svg class="a" style="left:2748px;top:432px" width="38" height="38" viewBox="0 0 38 38" fill="none"><g stroke="#414649" stroke-width="2" fill="none" stroke-linejoin="round"><path d="M18.6 8.2 H11.7 Q9.7 8.2 9.7 10.2 V28.7 Q9.7 30.7 11.7 30.7 H30"/><path d="M14.6 20.6 V24 H18.6 L30 12.6 L26.2 9 Z"/></g></svg>
<div class="a t" style="left:12px;top:546.5px;width:98px;text-align:right;font-size:24px;line-height:24px;color:#8e949b">5</div>
<div class="a t" style="left:140px;top:546.5px;font-size:24px;line-height:24px;color:#414649;font-weight:400;">关成龙</div>
<svg class="a" style="left:220px;top:546px" width="24" height="24" viewBox="0 0 24 24" fill="none"><g stroke="#e05b4b" stroke-width="2.7" fill="none"><circle cx="12" cy="12" r="10.6"/><path d="M4.7 4.7 L19.3 19.3"/></g></svg>
<div class="a" style="left:535px;top:544px;width:56px;height:32px;background:#c8cacd;border-radius:16px"></div>
<div class="a" style="left:539px;top:548px;width:24px;height:24px;background:#fff;border-radius:50%;box-shadow:-1px 1px 3px rgba(0,0,0,0.25)"></div>
<div class="a t" style="left:616px;top:547.5px;font-size:24px;line-height:24px;color:#414649;font-weight:400;">未启用</div>
<div class="a t" style="left:742px;top:546.5px;font-size:24px;line-height:24px;color:#488b88;font-weight:400;">关成龙的数据集</div>
<div class="a t" style="left:1385px;top:546.5px;font-size:24px;line-height:24px;color:#414649;font-weight:400;">定时触发-每天</div>
<div class="a" style="left:1666px;top:534px;width:48px;height:48px;border-radius:50%;background:#f2f2f2;overflow:hidden">
<div class="a" style="left:10.00px;top:10.00px;width:5.85px;height:5.85px;background:#3f5bd6"></div>
<div class="a" style="left:15.60px;top:10.00px;width:5.85px;height:5.85px;background:#3f5bd6"></div>
<div class="a" style="left:21.20px;top:10.00px;width:5.85px;height:5.85px;background:#3f5bd6"></div>
<div class="a" style="left:26.80px;top:10.00px;width:5.85px;height:5.85px;background:#3f5bd6"></div>
<div class="a" style="left:32.40px;top:10.00px;width:5.85px;height:5.85px;background:#3f5bd6"></div>
<div class="a" style="left:21.20px;top:15.60px;width:5.85px;height:5.85px;background:#3f5bd6"></div>
<div class="a" style="left:10.00px;top:21.20px;width:5.85px;height:5.85px;background:#3f5bd6"></div>
<div class="a" style="left:21.20px;top:21.20px;width:5.85px;height:5.85px;background:#3f5bd6"></div>
<div class="a" style="left:32.40px;top:21.20px;width:5.85px;height:5.85px;background:#3f5bd6"></div>
<div class="a" style="left:10.00px;top:26.80px;width:5.85px;height:5.85px;background:#3f5bd6"></div>
<div class="a" style="left:15.60px;top:26.80px;width:5.85px;height:5.85px;background:#3f5bd6"></div>
<div class="a" style="left:21.20px;top:26.80px;width:5.85px;height:5.85px;background:#3f5bd6"></div>
<div class="a" style="left:26.80px;top:26.80px;width:5.85px;height:5.85px;background:#3f5bd6"></div>
<div class="a" style="left:32.40px;top:26.80px;width:5.85px;height:5.85px;background:#3f5bd6"></div>
<div class="a" style="left:10.00px;top:32.40px;width:5.85px;height:5.85px;background:#3f5bd6"></div>
<div class="a" style="left:15.60px;top:32.40px;width:5.85px;height:5.85px;background:#3f5bd6"></div>
<div class="a" style="left:26.80px;top:32.40px;width:5.85px;height:5.85px;background:#3f5bd6"></div>
<div class="a" style="left:32.40px;top:32.40px;width:5.85px;height:5.85px;background:#3f5bd6"></div>
</div>
<div class="a t" style="left:1881px;top:545.5px;font-size:24px;line-height:24px;color:#414649;font-weight:400;"><span style="letter-spacing:1.03px">2022-04-18 11:00:00</span></div>
<svg class="a" style="left:2274px;top:545px" width="26" height="26" viewBox="0 0 26 26" fill="none"><g stroke="#4d9e62" stroke-width="2" fill="none"><circle cx="13" cy="13" r="11"/><path d="M7.3 13.6 L11.4 17.6 L18.8 10.4"/></g></svg>
<div class="a t" style="left:2322px;top:546.5px;font-size:24px;line-height:24px;color:#414649;font-weight:400;">成功</div>
<svg class="a" style="left:2578px;top:538px" width="36" height="38" viewBox="0 0 36 38" fill="none"><g stroke="#414649" stroke-width="2" fill="none"><path d="M8.6 11.4 A11.5 11.5 0 0 1 28.6 18.6"/><path d="M5.8 19.4 A11.5 11.5 0 0 0 16.6 30.7"/><path d="M7.5 7.3 V13.2 H13.5"/><circle cx="24.1" cy="26.5" r="5.1"/><path d="M24.1 24.5 V26.5 L25.6 28.2"/></g></svg>
<div class="a t" style="left:2619px;top:546.5px;font-size:24px;line-height:24px;color:#414649;font-weight:400;">发送历史</div>
<svg class="a" style="left:2748px;top:538px" width="38" height="38" viewBox="0 0 38 38" fill="none"><g stroke="#414649" stroke-width="2" fill="none" stroke-linejoin="round"><path d="M18.6 8.2 H11.7 Q9.7 8.2 9.7 10.2 V28.7 Q9.7 30.7 11.7 30.7 H30"/><path d="M14.6 20.6 V24 H18.6 L30 12.6 L26.2 9 Z"/></g></svg>
<div class="a t" style="left:12px;top:652.5px;width:98px;text-align:right;font-size:24px;line-height:24px;color:#8e949b">6</div>
<div class="a t" style="left:140px;top:652.5px;font-size:24px;line-height:24px;color:#414649;font-weight:400;"><span style="letter-spacing:-1.7px">111</span></div>
<svg class="a" style="left:181.5px;top:652px" width="24" height="24" viewBox="0 0 24 24" fill="none"><g stroke="#e05b4b" stroke-width="2.7" fill="none"><circle cx="12" cy="12" r="10.6"/><path d="M4.7 4.7 L19.3 19.3"/></g></svg>
<div class="a" style="left:535px;top:650px;width:56px;height:32px;background:#c8cacd;border-radius:16px"></div>
<div class="a" style="left:539px;top:654px;width:24px;height:24px;background:#fff;border-radius:50%;box-shadow:-1px 1px 3px rgba(0,0,0,0.25)"></div>
<div class="a t" style="left:616px;top:653.5px;font-size:24px;line-height:24px;color:#414649;font-weight:400;">未启用</div>
<div class="a t" style="left:742px;top:652.5px;font-size:24px;line-height:24px;color:#488b88;font-weight:400;">测试<span style="letter-spacing:0.45px">demo</span></div>
<div class="a t" style="left:1385px;top:652.5px;font-size:24px;line-height:24px;color:#414649;font-weight:400;">数据更新后、<span style="letter-spacing:-1.3px">URL</span>触发</div>
<div class="a" style="left:1666px;top:640px;width:48px;height:48px;border-radius:50%;background:#f2f2f2;overflow:hidden">
<div class="a" style="left:10.00px;top:10.00px;width:5.85px;height:5.85px;background:#67c7d9"></div>
<div class="a" style="left:32.40px;top:10.00px;width:5.85px;height:5.85px;background:#67c7d9"></div>
<div class="a" style="left:10.00px;top:15.60px;width:5.85px;height:5.85px;background:#67c7d9"></div>
<div class="a" style="left:15.60px;top:15.60px;width:5.85px;height:5.85px;background:#67c7d9"></div>
<div class="a" style="left:21.20px;top:15.60px;width:5.85px;height:5.85px;background:#67c7d9"></div>
<div class="a" style="left:26.80px;top:15.60px;width:5.85px;height:5.85px;background:#67c7d9"></div>
<div class="a" style="left:32.40px;top:15.60px;width:5.85px;height:5.85px;background:#67c7d9"></div>
<div class="a" style="left:10.00px;top:21.20px;width:5.85px;height:5.85px;background:#67c7d9"></div>
<div class="a" style="left:15.60px;top:21.20px;width:5.85px;height:5.85px;background:#67c7d9"></div>
<div class="a" style="left:21.20px;top:21.20px;width:5.85px;height:5.85px;background:#67c7d9"></div>
<div class="a" style="left:26.80px;top:21.20px;width:5.85px;height:5.85px;background:#67c7d9"></div>
<div class="a" style="left:32.40px;top:21.20px;width:5.85px;height:5.85px;background:#67c7d9"></div>
<div class="a" style="left:10.00px;top:26.80px;width:5.85px;height:5.85px;background:#67c7d9"></div>
<div class="a" style="left:32.40px;top:26.80px;width:5.85px;height:5.85px;background:#67c7d9"></div>
<div class="a" style="left:15.60px;top:32.40px;width:5.85px;height:5.85px;background:#67c7d9"></div>
<div class="a" style="left:26.80px;top:32.40px;width:5.85px;height:5.85px;background:#67c7d9"></div>
</div>
<div class="a t" style="left:1881px;top:651.5px;font-size:24px;line-height:24px;color:#414649;font-weight:400;"><span style="letter-spacing:0.82px">2023-07-12 10:16:02</span></div>
<svg class="a" style="left:2274px;top:651px" width="26" height="26" viewBox="0 0 26 26" fill="none"><g stroke="#4d9e62" stroke-width="2" fill="none"><circle cx="13" cy="13" r="11"/><path d="M7.3 13.6 L11.4 17.6 L18.8 10.4"/></g></svg>
<div class="a t" style="left:2322px;top:652.5px;font-size:24px;line-height:24px;color:#414649;font-weight:400;">成功</div>
<svg class="a" style="left:2578px;top:644px" width="36" height="38" viewBox="0 0 36 38" fill="none"><g stroke="#414649" stroke-width="2" fill="none"><path d="M8.6 11.4 A11.5 11.5 0 0 1 28.6 18.6"/><path d="M5.8 19.4 A11.5 11.5 0 0 0 16.6 30.7"/><path d="M7.5 7.3 V13.2 H13.5"/><circle cx="24.1" cy="26.5" r="5.1"/><path d="M24.1 24.5 V26.5 L25.6 28.2"/></g></svg>
<div class="a t" style="left:2619px;top:652.5px;font-size:24px;line-height:24px;color:#414649;font-weight:400;">发送历史</div>
<svg class="a" style="left:2748px;top:644px" width="38" height="38" viewBox="0 0 38 38" fill="none"><g stroke="#414649" stroke-width="2" fill="none" stroke-linejoin="round"><path d="M18.6 8.2 H11.7 Q9.7 8.2 9.7 10.2 V28.7 Q9.7 30.7 11.7 30.7 H30"/><path d="M14.6 20.6 V24 H18.6 L30 12.6 L26.2 9 Z"/></g></svg>
<div class="a t" style="left:12px;top:758.5px;width:98px;text-align:right;font-size:24px;line-height:24px;color:#8e949b">7</div>
<div class="a t" style="left:140px;top:758.5px;font-size:24px;line-height:24px;color:#414649;font-weight:400;">李仕林测试</div>
<svg class="a" style="left:268px;top:758px" width="24" height="24" viewBox="0 0 24 24" fill="none"><g stroke="#e05b4b" stroke-width="2.7" fill="none"><circle cx="12" cy="12" r="10.6"/><path d="M4.7 4.7 L19.3 19.3"/></g></svg>
<div class="a" style="left:535px;top:756px;width:56px;height:32px;background:#c8cacd;border-radius:16px"></div>
<div class="a" style="left:539px;top:760px;width:24px;height:24px;background:#fff;border-radius:50%;box-shadow:-1px 1px 3px rgba(0,0,0,0.25)"></div>
<div class="a t" style="left:616px;top:759.5px;font-size:24px;line-height:24px;color:#414649;font-weight:400;">未启用</div>
<div class="a t" style="left:1385px;top:758.5px;font-size:24px;line-height:24px;color:#414649;font-weight:400;">定时触发-每天</div>
<div class="a" style="left:1666px;top:746px;width:48px;height:48px;border-radius:50%;background:#f2f2f2;overflow:hidden">
<div class="a" style="left:15.60px;top:10.00px;width:5.85px;height:5.85px;background:#6bd3dc"></div>
<div class="a" style="left:21.20px;top:10.00px;width:5.85px;height:5.85px;background:#6bd3dc"></div>
<div class="a" style="left:26.80px;top:10.00px;width:5.85px;height:5.85px;background:#6bd3dc"></div>
<div class="a" style="left:21.20px;top:21.20px;width:5.85px;height:5.85px;background:#6bd3dc"></div>
<div class="a" style="left:10.00px;top:26.80px;width:5.85px;height:5.85px;background:#6bd3dc"></div>
<div class="a" style="left:15.60px;top:26.80px;width:5.85px;height:5.85px;background:#6bd3dc"></div>
<div class="a" style="left:21.20px;top:26.80px;width:5.85px;height:5.85px;background:#6bd3dc"></div>
<div class="a" style="left:26.80px;top:26.80px;width:5.85px;height:5.85px;background:#6bd3dc"></div>
<div class="a" style="left:32.40px;top:26.80px;width:5.85px;height:5.85px;background:#6bd3dc"></div>
<div class="a" style="left:15.60px;top:32.40px;width:5.85px;height:5.85px;background:#6bd3dc"></div>
<div class="a" style="left:21.20px;top:32.40px;width:5.85px;height:5.85px;background:#6bd3dc"></div>
<div class="a" style="left:26.80px;top:32.40px;width:5.85px;height:5.85px;background:#6bd3dc"></div>
</div>
<div class="a t" style="left:1881px;top:757.5px;font-size:24px;line-height:24px;color:#414649;font-weight:400;"><span style="letter-spacing:1.07px">2022-03-25 18:16:34</span></div>
<svg class="a" style="left:2274px;top:757px" width="26" height="26" viewBox="0 0 26 26" fill="none"><g stroke="#4d9e62" stroke-width="2" fill="none"><circle cx="13" cy="13" r="11"/><path d="M7.3 13.6 L11.4 17.6 L18.8 10.4"/></g></svg>
<div class="a t" style="left:2322px;top:758.5px;font-size:24px;line-height:24px;color:#414649;font-weight:400;">成功</div>
<svg class="a" style="left:2578px;top:750px" width="36" height="38" viewBox="0 0 36 38" fill="none"><g stroke="#414649" stroke-width="2" fill="none"><path d="M8.6 11.4 A11.5 11.5 0 0 1 28.6 18.6"/><path d="M5.8 19.4 A11.5 11.5 0 0 0 16.6 30.7"/><path d="M7.5 7.3 V13.2 H13.5"/><circle cx="24.1" cy="26.5" r="5.1"/><path d="M24.1 24.5 V26.5 L25.6 28.2"/></g></svg>
<div class="a t" style="left:2619px;top:758.5px;font-size:24px;line-height:24px;color:#414649;font-weight:400;">发送历史</div>
<svg class="a" style="left:2748px;top:750px" width="38" height="38" viewBox="0 0 38 38" fill="none"><g stroke="#414649" stroke-width="2" fill="none" stroke-linejoin="round"><path d="M18.6 8.2 H11.7 Q9.7 8.2 9.7 10.2 V28.7 Q9.7 30.7 11.7 30.7 H30"/><path d="M14.6 20.6 V24 H18.6 L30 12.6 L26.2 9 Z"/></g></svg>
<div class="a t" style="left:12px;top:864.5px;width:98px;text-align:right;font-size:24px;line-height:24px;color:#8e949b">8</div>
<div class="a t" style="left:140px;top:864.5px;font-size:24px;line-height:24px;color:#414649;font-weight:400;">数据集订阅测试</div>
<svg class="a" style="left:316px;top:864px" width="24" height="24" viewBox="0 0 24 24" fill="none"><g stroke="#e05b4b" stroke-width="2.7" fill="none"><circle cx="12" cy="12" r="10.6"/><path d="M4.7 4.7 L19.3 19.3"/></g></svg>
<div class="a" style="left:535px;top:862px;width:56px;height:32px;background:#c8cacd;border-radius:16px"></div>
<div class="a" style="left:539px;top:866px;width:24px;height:24px;background:#fff;border-radius:50%;box-shadow:-1px 1px 3px rgba(0,0,0,0.25)"></div>
<div class="a t" style="left:616px;top:865.5px;font-size:24px;line-height:24px;color:#414649;font-weight:400;">未启用</div>
<div class="a t" style="left:742px;top:864.5px;font-size:24px;line-height:24px;color:#488b88;font-weight:400;"><span style="letter-spacing:0.77px">zw01.</span>产品培训演示数据集（含<span style="letter-spacing:0.77px">2019</span>数据）<span style="letter-spacing:0.77px">-</span>全<span style="letter-spacing:0.77px">-20210...</span></div>
<div class="a t" style="left:1385px;top:864.5px;font-size:24px;line-height:24px;color:#414649;font-weight:400;">数据更新后</div>
<div class="a" style="left:1666px;top:852px;width:48px;height:48px;border-radius:50%;background:#f2f2f2;overflow:hidden">
<div class="a" style="left:10.00px;top:10.00px;width:5.85px;height:5.85px;background:#3f52d6"></div>
<div class="a" style="left:15.60px;top:10.00px;width:5.85px;height:5.85px;background:#3f52d6"></div>
<div class="a" style="left:21.20px;top:10.00px;width:5.85px;height:5.85px;background:#3f52d6"></div>
<div class="a" style="left:26.80px;top:10.00px;width:5.85px;height:5.85px;background:#3f52d6"></div>
<div class="a" style="left:32.40px;top:10.00px;width:5.85px;height:5.85px;background:#3f52d6"></div>
<div class="a" style="left:10.00px;top:15.60px;width:5.85px;height:5.85px;background:#3f52d6"></div>
<div class="a" style="left:15.60px;top:15.60px;width:5.85px;height:5.85px;background:#3f52d6"></div>
<div class="a" style="left:21.20px;top:15.60px;width:5.85px;height:5.85px;background:#3f52d6"></div>
<div class="a" style="left:26.80px;top:15.60px;width:5.85px;height:5.85px;background:#3f52d6"></div>
<div class="a" style="left:32.40px;top:15.60px;width:5.85px;height:5.85px;background:#3f52d6"></div>
<div class="a" style="left:21.20px;top:21.20px;width:5.85px;height:5.85px;background:#3f52d6"></div>
<div class="a" style="left:10.00px;top:26.80px;width:5.85px;height:5.85px;background:#3f52d6"></div>
<div class="a" style="left:15.60px;top:26.80px;width:5.85px;height:5.85px;background:#3f52d6"></div>
<div class="a" style="left:21.20px;top:26.80px;width:5.85px;height:5.85px;background:#3f52d6"></div>
<div class="a" style="left:26.80px;top:26.80px;width:5.85px;height:5.85px;background:#3f52d6"></div>
<div class="a" style="left:32.40px;top:26.80px;width:5.85px;height:5.85px;background:#3f52d6"></div>
<div class="a" style="left:15.60px;top:32.40px;width:5.85px;height:5.85px;background:#3f52d6"></div>
<div class="a" style="left:21.20px;top:32.40px;width:5.85px;height:5.85px;background:#3f52d6"></div>
<div class="a" style="left:26.80px;top:32.40px;width:5.85px;height:5.85px;background:#3f52d6"></div>
</div>
<div class="a t" style="left:1881px;top:863.5px;font-size:24px;line-height:24px;color:#414649;font-weight:400;"><span style="letter-spacing:1.26px">2022-08-29 21:42:30</span></div>
<svg class="a" style="left:2274px;top:863px" width="26" height="26" viewBox="0 0 26 26" fill="none"><g stroke="#4d9e62" stroke-width="2" fill="none"><circle cx="13" cy="13" r="11"/><path d="M7.3 13.6 L11.4 17.6 L18.8 10.4"/></g></svg>
<div class="a t" style="left:2322px;top:864.5px;font-size:24px;line-height:24px;color:#414649;font-weight:400;">成功</div>
<svg class="a" style="left:2578px;top:856px" width="36" height="38" viewBox="0 0 36 38" fill="none"><g stroke="#414649" stroke-width="2" fill="none"><path d="M8.6 11.4 A11.5 11.5 0 0 1 28.6 18.6"/><path d="M5.8 19.4 A11.5 11.5 0 0 0 16.6 30.7"/><path d="M7.5 7.3 V13.2 H13.5"/><circle cx="24.1" cy="26.5" r="5.1"/><path d="M24.1 24.5 V26.5 L25.6 28.2"/></g></svg>
<div class="a t" style="left:2619px;top:864.5px;font-size:24px;line-height:24px;color:#414649;font-weight:400;">发送历史</div>
<svg class="a" style="left:2748px;top:856px" width="38" height="38" viewBox="0 0 38 38" fill="none"><g stroke="#414649" stroke-width="2" fill="none" stroke-linejoin="round"><path d="M18.6 8.2 H11.7 Q9.7 8.2 9.7 10.2 V28.7 Q9.7 30.7 11.7 30.7 H30"/><path d="M14.6 20.6 V24 H18.6 L30 12.6 L26.2 9 Z"/></g></svg>
</div>
<div class="a" style="left:2178px;top:764px;width:80px;height:44px;background:#eef3f3;border-radius:4px"></div>
<div class="a t " style="left:2195.6px;top:774px;font-size:24px;line-height:24px;color:#488b88;font-weight:400;">手动</div>
<div class="a" style="left:2174px;top:870px;width:80px;height:44px;background:#eef3f3;border-radius:4px"></div>
<div class="a t " style="left:2191.6px;top:880px;font-size:24px;line-height:24px;color:#488b88;font-weight:400;">手动</div>
<div class="a" style="left:2176px;top:1082px;width:80px;height:44px;background:#eef3f3;border-radius:4px"></div>
<div class="a t " style="left:2193.6px;top:1092px;font-size:24px;line-height:24px;color:#488b88;font-weight:400;">手动</div>
<div class="a" style="left:2183px;top:1188px;width:80px;height:44px;background:#eef3f3;border-radius:4px"></div>
<div class="a t " style="left:2200.6px;top:1198px;font-size:24px;line-height:24px;color:#488b88;font-weight:400;">手动</div>
<div class="a" style="left:48px;top:1354px;width:2784px;height:2px;background:#e1e4e9"></div>
<div class="a" style="left:48px;top:439px;width:2px;height:917px;background:#e1e4e9"></div>
<div class="a" style="left:170px;top:1334px;width:2650px;height:20px;background:#ffffff"></div>
<div class="a" style="left:170px;top:1334px;width:2224px;height:20px;background:#adb8c7;border-radius:10px"></div>
<div class="a" style="left:2820px;top:440px;width:12px;height:640px;background:#adb8c7;border-radius:6px"></div>
<div class="a" style="left:50px;top:1334px;width:118px;height:20px;background:#f3f4f8"></div>
<div class="a" style="left:168px;top:1334px;width:2px;height:20px;background:#e1e4e9"></div>
<svg class="a" style="left:1245px;top:1404px;" width="28" height="32" viewBox="0 0 28 32" fill="none"><path d="M19 8 L8.5 16 L19 24" stroke="#a6acb3" stroke-width="2" fill="none"/></svg>
<div class="a" style="left:1307px;top:1388px;width:64px;height:64px;border:2px solid #488b88;border-radius:4px;box-sizing:border-box"></div>
<div class="a t " style="left:1332px;top:1410px;font-size:24px;line-height:24px;color:#488b88;font-weight:700;">1</div>
<svg class="a" style="left:1405px;top:1404px;" width="28" height="32" viewBox="0 0 28 32" fill="none"><path d="M8.5 8 L19 16 L8.5 24" stroke="#a6acb3" stroke-width="2" fill="none"/></svg>
<div class="a" style="left:1483px;top:1388px;width:170px;height:64px;border:2px solid #d5d9df;border-radius:4px;box-sizing:border-box"></div>
<div class="a t " style="left:1509px;top:1409px;font-size:24px;line-height:24px;color:#414649;font-weight:400;">20 条/页</div>
<svg class="a" style="left:1603px;top:1406px;" width="32" height="28" viewBox="0 0 32 28" fill="none"><path d="M6 8 L16 20 L26 8" stroke="#414649" stroke-width="2.2" fill="none"/></svg>
<div class="a" style="left:1081.5px;top:219.5px;width:290px;height:107px;border:4px solid #ff0000;box-sizing:border-box"></div>
<div class="a" style="left:1067px;top:199.5px;width:46px;height:46px;background:#ef4735;border-radius:50%"></div>
<svg class="a" style="left:1067px;top:199.5px;" width="46" height="46" viewBox="0 0 46 46" fill="none"><path d="M24.2 10.3 H27.3 V31.6 H23.1 V15 L17.7 18.3 V14 Z" fill="#fff"/></svg>
<div class="a" style="left:2545px;top:329.5px;width:302px;height:106px;border:4px solid #ff0000;box-sizing:border-box"></div>
<div class="a" style="left:2530px;top:305.5px;width:47px;height:47px;background:#ef4735;border-radius:50%"></div>
<div class="a t" style="left:2530px;top:313px;width:47px;text-align:center;font-size:28px;line-height:32px;color:#fff;font-weight:700">2</div>
</div></body></html>
